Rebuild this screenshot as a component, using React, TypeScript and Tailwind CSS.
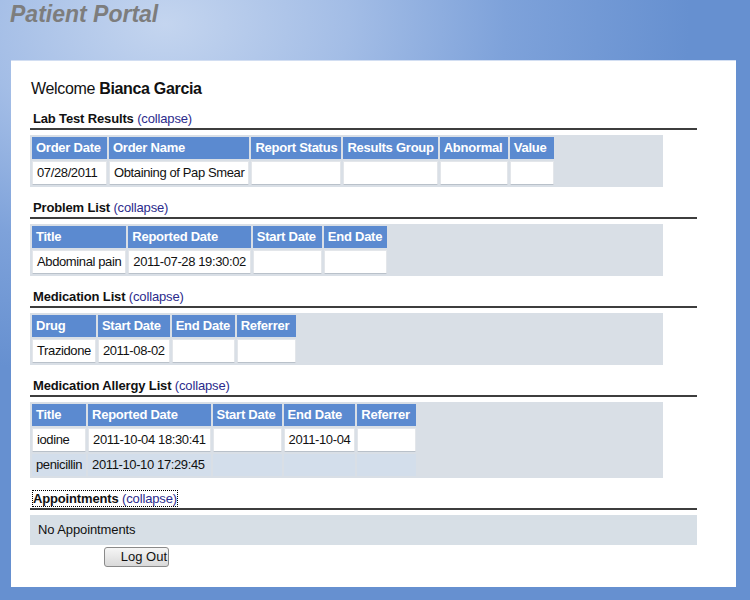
type Col = { label: string; w: string }
type Row = { cells: string[]; alt?: boolean }

type TableProps = { cols: Col[]; rows: Row[] }

function DataTable({ cols, rows }: TableProps) {
  return (
    <div className="w-[633px] bg-[#d9dfe6]">
      <table className="border-separate border-spacing-[2px] text-[13px] leading-[16px]">
        <thead>
          <tr>
            {cols.map((c) => (
              <th key={c.label} className={`${c.w} bg-[#5b8ad0] px-[4px] py-[3px] text-left font-bold tracking-[-0.25px] whitespace-nowrap text-white`}>
                {c.label}
              </th>
            ))}
          </tr>
        </thead>
        <tbody>
          {rows.map((r, i) => (
            <tr key={i}>
              {cols.map((c, j) => (
                <td
                  key={c.label}
                  className={
                    r.alt
                      ? "bg-[#d3deeb] px-[4px] py-[3px] whitespace-nowrap tracking-[-0.38px] text-[#111]"
                      : "bg-white px-[4px] py-[3px] whitespace-nowrap tracking-[-0.38px] text-[#111] border border-[#e3e6ea] border-b-[#b9c1ca] h-[24px]"
                  }
                >
                  {r.cells[j] ?? ""}
                </td>
              ))}
            </tr>
          ))}
        </tbody>
      </table>
    </div>
  )
}

function SectionHead({ title, focus }: { title: string; focus?: boolean }) {
  return (
    <div className="mt-[13px] mb-[5px] w-[667px] border-b-2 border-[#3d3d3d] pb-[1px] pl-[3px] text-[13px] leading-[16px] tracking-[-0.15px]">
      <span className={focus ? "outline-1 outline-dotted outline-black" : ""}>
        <span className="font-bold text-[#111]">{title}</span>{" "}
        <span className="text-[#2b2b8c]">(collapse)</span>
      </span>
    </div>
  )
}

export default function App() {
  return (
    <div
      className="min-h-[600px] w-[750px] bg-[radial-gradient(ellipse_70%_60%_at_22%_4%,#c4d5ef_0%,#a3bde6_35%,#7ea2da_65%,#6690d0_100%)] font-['Liberation_Sans',Arial,sans-serif]"
    >
      <div className="h-[60px] pl-[10px] pt-[1px]">
        <h1 className="text-[23px] leading-[27px] font-bold italic text-[#7d7d7d]">Patient Portal</h1>
      </div>
      <div className="ml-[11px] h-[527px] w-[725px] border-t border-[#d2def2] bg-white pl-[19px] pt-[18px]">
        <p className="pl-[1px] text-[16px] leading-[19px] tracking-[-0.33px] text-[#111]">
          Welcome <b>Bianca Garcia</b>
        </p>

        <SectionHead title="Lab Test Results" />
        <DataTable
          cols={[
            { label: "Order Date", w: "w-[75px]" },
            { label: "Order Name", w: "w-[140px]" },
            { label: "Report Status", w: "w-[90px]" },
            { label: "Results Group", w: "w-[94px]" },
            { label: "Abnormal", w: "w-[68px]" },
            { label: "Value", w: "w-[44px]" },
          ]}
          rows={[{ cells: ["07/28/2011", "Obtaining of Pap Smear", "", "", "", ""] }]}
        />

        <SectionHead title="Problem List" />
        <DataTable
          cols={[
            { label: "Title", w: "w-[92px]" },
            { label: "Reported Date", w: "w-[121px]" },
            { label: "Start Date", w: "w-[69px]" },
            { label: "End Date", w: "w-[63px]" },
          ]}
          rows={[{ cells: ["Abdominal pain", "2011-07-28 19:30:02", "", ""] }]}
        />

        <SectionHead title="Medication List" />
        <DataTable
          cols={[
            { label: "Drug", w: "w-[60px]" },
            { label: "Start Date", w: "w-[69px]" },
            { label: "End Date", w: "w-[63px]" },
            { label: "Referrer", w: "w-[59px]" },
          ]}
          rows={[{ cells: ["Trazidone", "2011-08-02", "", ""] }]}
        />

        <SectionHead title="Medication Allergy List" />
        <DataTable
          cols={[
            { label: "Title", w: "w-[54px]" },
            { label: "Reported Date", w: "w-[121px]" },
            { label: "Start Date", w: "w-[69px]" },
            { label: "End Date", w: "w-[68px]" },
            { label: "Referrer", w: "w-[59px]" },
          ]}
          rows={[
            { cells: ["iodine", "2011-10-04 18:30:41", "", "2011-10-04", ""] },
            { cells: ["penicillin", "2011-10-10 17:29:45", "", "", ""], alt: true },
          ]}
        />

        <SectionHead title="Appointments" focus />
        <div className="flex h-[30px] w-[667px] items-center bg-[#d7dfe6] pl-[8px] text-[13px] tracking-[-0.1px] text-[#111]">
          No Appointments
        </div>
        <button className="mt-[2px] ml-[74px] flex h-[20px] w-[65px] items-center justify-end rounded-[3px] border border-[#8a8a8a] bg-gradient-to-b from-[#f6f6f6] to-[#d9d9d9] pr-[1px] text-[13px] leading-[16px] text-[#111]">
          Log Out
        </button>
      </div>
    </div>
  )
}
